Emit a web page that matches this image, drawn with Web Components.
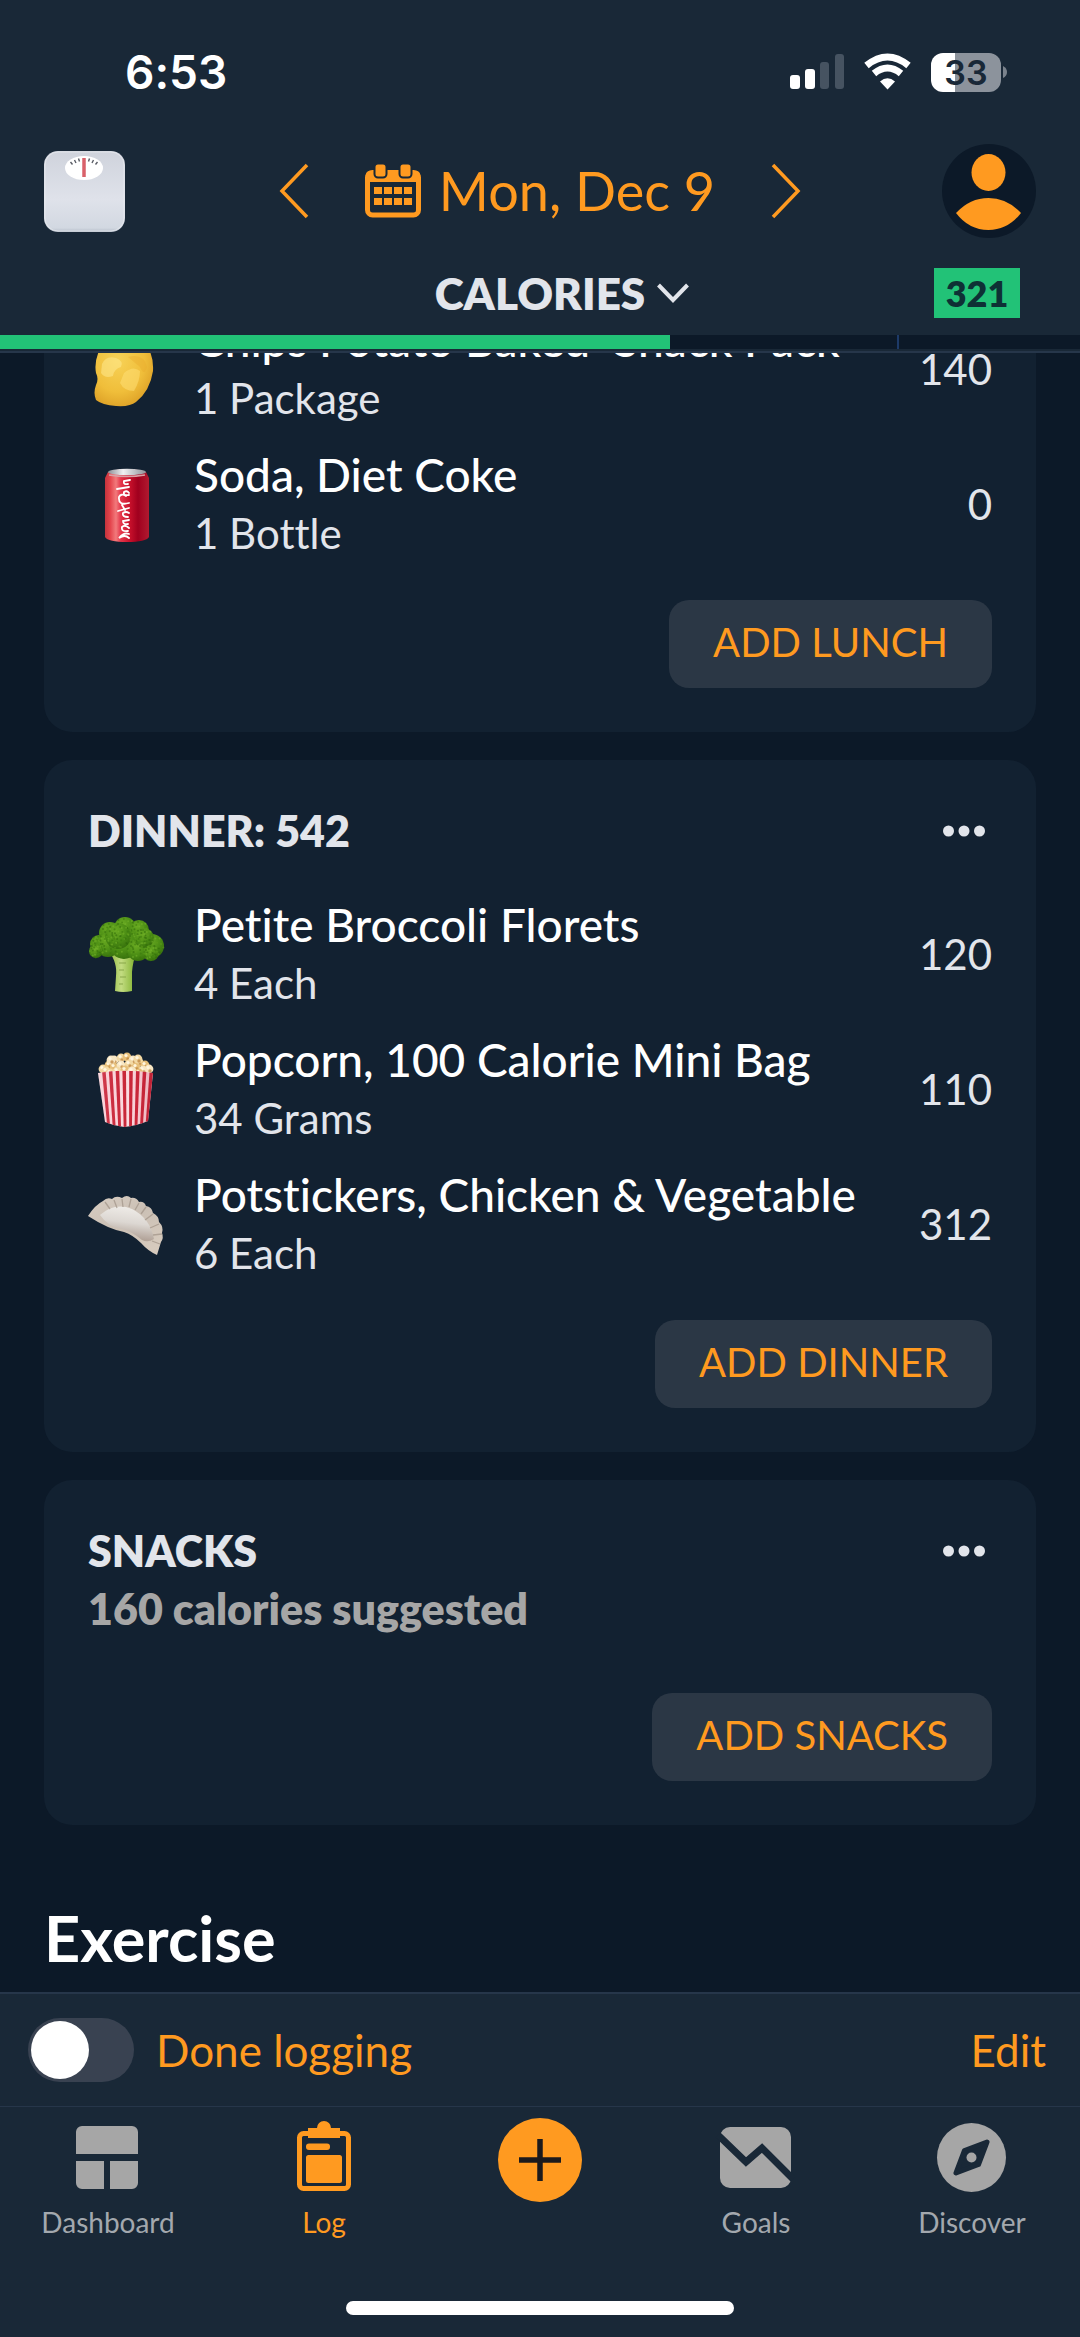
<!DOCTYPE html>
<html lang="en">
<head>
<meta charset="utf-8">
<meta name="viewport" content="width=device-width, initial-scale=1">
<title>Food log</title>
<style>
  :root {
    --bg: #0c1928;
    --bar: #192837;
    --card: #122131;
    --raised: #2b3745;
    --line: #26364a;
    --accent: #ff9a20;
    --green: #22c277;
    --text: #ffffff;
    --soft: #e2e5eb;
    --muted: #a6a6a6;
  }
  body {
    margin: 0;
    background: var(--bg);
    color: var(--text);
    font-family: Lato, "Open Sans", sans-serif;
    font-variant-ligatures: none;
  }
</style>
</head>
<body>
<log-app>
  <meal-card action="ADD LUNCH" continued>
    <food-row icon="chips" name="Chips Potato Baked  Snack Pack" amount="1 Package" calories="140"></food-row>
    <food-row icon="can" name="Soda, Diet Coke" amount="1 Bottle" calories="0"></food-row>
  </meal-card>
  <meal-card heading="DINNER: 542" action="ADD DINNER">
    <food-row icon="broccoli" name="Petite Broccoli Florets" amount="4 Each" calories="120"></food-row>
    <food-row icon="popcorn" name="Popcorn, 100 Calorie Mini Bag" amount="34 Grams" calories="110"></food-row>
    <food-row icon="dumpling" name="Potstickers, Chicken &amp; Vegetable" amount="6 Each" calories="312"></food-row>
  </meal-card>
  <meal-card heading="SNACKS" note="160 calories suggested" action="ADD SNACKS"></meal-card>
</log-app>

<script>
const RESET = `
  *, *::before, *::after { box-sizing: border-box; }
  button { font: inherit; color: inherit; background: none; border: 0; padding: 0; margin: 0; cursor: pointer; }
  a { color: inherit; text-decoration: none; }
  svg { display: block; flex: none; overflow: visible; }
  h1, h2, p { margin: 0; }
`;

class BaseElement extends HTMLElement {
  connectedCallback() {
    if (this.shadowRoot) return;
    const t = document.createElement('template');
    t.innerHTML = `<style>${RESET}${this.styles()}</style>${this.markup()}`;
    this.attachShadow({ mode: 'open' }).append(t.content.cloneNode(true));
  }
  attr(n) {
    return (this.getAttribute(n) || '').replace(/&/g, '&amp;').replace(/</g, '&lt;');
  }
}

/* ---------- food pictures, 76 x 76 ---------- */

function broccoli() {
  const blobs = [[11,28,9],[22,17,11],[37,12,11],[51,14,10],[64,30,12],[20,29,12],[36,28,15],[50,34,11],[8,35,7],[30,20,13],[56,22,10],[63,37,8]];
  const cols = ['#2f6a0a', '#5f9f1c', '#76b52c', '#38760d'];
  let head = '';
  for (const [x, y, r] of blobs) head += `<circle cx="${x}" cy="${y}" r="${r}" fill="url(#leaf)"/>`;
  let dots = '';
  for (const [x, y, r] of blobs)
    for (let i = 0; i < 22; i++) {
      const a = i * 2.4, d = r * Math.sqrt((i + 1) / 24);
      dots += `<circle cx="${(x + d * Math.cos(a)).toFixed(1)}" cy="${(y + d * Math.sin(a)).toFixed(1)}" r="1" fill="${cols[i % 4]}" opacity=".55"/>`;
    }
  return `<defs>
      <radialGradient id="leaf" cx=".4" cy=".3" r=".75"><stop offset="0" stop-color="#6aab22"/><stop offset=".6" stop-color="#4a8c14"/><stop offset="1" stop-color="#366f0c"/></radialGradient>
      <linearGradient id="stem"><stop offset="0" stop-color="#8fb83c"/><stop offset=".45" stop-color="#c3dc82"/><stop offset="1" stop-color="#7fb02c"/></linearGradient>
    </defs>
    <path d="M21 36 C27 43 29 52 28 60 L27 75 Q35 77 44 75 L44 56 Q45 45 48 38 Z" fill="url(#stem)"/>
    <path d="M31 47h7M31 54h5M32 61h6M31 68h4" stroke="#8aa84a" stroke-width="1.2"/>
    ${head}${dots}`;
}

function popcorn() {
  const puffs = [[15,18],[21,14],[26,9],[33,7],[39,6],[45,9],[51,11],[57,14],[61,18],[18,20],[26,16],[33,14],[41,13],[48,16],[55,19],[29,20],[37,19],[44,20],[22,22],[51,22],[23,9],[50,8]];
  let p = '';
  puffs.forEach(([x, y], i) => {
    p += `<circle cx="${x}" cy="${y}" r="4.4" fill="${['#f3d9a4', '#e7bf7a', '#f8e7c4'][i % 3]}"/><circle cx="${x + 1}" cy="${y + 2}" r="1.7" fill="#b97c35" opacity=".7"/><circle cx="${x - 1}" cy="${y - 1.5}" r="1.6" fill="#fff6df"/>`;
  });
  let s = '';
  for (let i = 0; i < 8; i++) {
    const a = 14 + i * 6.8, b = 19.5 + i * 5.4;
    s += `<path d="M${a} 20 L${a + 3.6} 20 L${b + 2.8} 78 L${b} 78 Z" fill="#c9283a"/>`;
  }
  return `<defs><clipPath id="tub"><path d="M10 22 Q37 17 65 22 L60 70 Q48 75 36 76 Q26 75 17 71 Z"/></clipPath>
      <linearGradient id="shade"><stop offset="0" stop-color="#fff" stop-opacity=".25"/><stop offset=".5" stop-color="#e02040" stop-opacity="0"/><stop offset="1" stop-color="#80001c" stop-opacity=".3"/></linearGradient></defs>
    ${p}
    <g clip-path="url(#tub)"><rect width="76" height="80" fill="#fbdde2"/>${s}<rect width="76" height="80" fill="url(#shade)"/></g>`;
}

const dumpling = () => `<defs>
    <linearGradient id="dough" x1="0" y1="0" x2=".7" y2="1"><stop offset="0" stop-color="#d8cec3"/><stop offset=".5" stop-color="#cbc0b5"/><stop offset="1" stop-color="#d6cabd"/></linearGradient>
    <linearGradient id="belly" x1=".55" y1="0" x2=".35" y2="1"><stop offset="0" stop-color="#efece8"/><stop offset=".45" stop-color="#dcd7d2"/><stop offset="1" stop-color="#a59387"/></linearGradient>
  </defs>
  <path d="M0 30 Q7 19 15 15 Q19 11 24 13 Q28 9 34 12 Q39 8 43 12 Q48 11 51 16 Q56 15 58 20 Q64 21 65 27 Q71 30 71 36 Q76 41 74 47 Q76 52 73 56 L69 69 Q60 65 53 57 Q45 49 36 46 Q20 43 0 30 Z" fill="url(#dough)"/>
  <path d="M12 29 Q27 16 44 23 Q62 32 66 53 Q60 57 54 54 Q45 46 34 43 Q20 41 12 29 Z" fill="url(#belly)"/>
  <path d="M17 16l5 7M26 14l3 8M34 13l1 8M43 13l-2 8M51 17l-4 7M58 21l-5 7M65 28l-8 6M71 38l-9 4M74 48l-9 1M72 58l-8-3" stroke="#a3968a" stroke-width="1.3" opacity=".75"/>`;

const can = () => `<defs>
    <linearGradient id="red"><stop offset="0" stop-color="#c4333c"/><stop offset=".12" stop-color="#e4444c"/><stop offset=".25" stop-color="#f27a7c"/><stop offset=".36" stop-color="#e5354a"/><stop offset=".58" stop-color="#c40f2a"/><stop offset=".75" stop-color="#a0001e"/><stop offset="1" stop-color="#b01a30"/></linearGradient>
    <linearGradient id="lid"><stop offset="0" stop-color="#8d8f96"/><stop offset=".4" stop-color="#f0f0f2"/><stop offset="1" stop-color="#8f9299"/></linearGradient>
  </defs>
  <path d="M20 6 Q39 0 58 6 L61 12 V71 Q58 76 39 76 Q20 76 17 71 V12 Z" fill="url(#red)"/>
  <ellipse cx="39" cy="6" rx="19" ry="3.2" fill="url(#lid)"/>
  <path d="M21 9 Q39 12 57 9" fill="none" stroke="#d9a0a4" stroke-width="1.5"/>
  <path d="M41 72 Q37 68 31 72 Q36 66 41 68 M40 65 Q33 66 34 61 Q37 58 41 62 M40 58 Q35 59 35 55 L41 54 M40 51 Q34 51 35 47 Q38 45 41 47 M30 45 L41 42 M37 44 L34 39 M41 37 Q30 40 31 31 Q33 27 38 30 M41 29 Q35 30 36 26 Q39 24 41 27 M29 23 L41 21 M40 18 Q35 19 36 15 L42 14" fill="none" stroke="#fff" stroke-width="1.8" stroke-linecap="round"/>`;

const chips = () => `<defs>
    <radialGradient id="chip" cx=".4" cy=".35" r=".75"><stop offset="0" stop-color="#f7d257"/><stop offset=".6" stop-color="#f0be3a"/><stop offset="1" stop-color="#d99a22"/></radialGradient>
  </defs>
  <path d="M18 8 Q40 -2 56 12 Q66 22 65 40 Q62 60 48 71 Q42 76 28 75 Q14 74 8 69 Q5 62 8 54 Q11 48 8 42 Q5 26 18 8 Z" fill="url(#chip)"/>
  <path d="M14 33 Q18 24 28 27 Q36 30 33 36 Q26 38 25 45 Q17 48 13 42 Z" fill="#ffeb94" opacity=".5"/>
  <path d="M36 42 Q45 34 52 40 Q52 50 46 60 Q36 60 32 52 Z" fill="#ffe27a" opacity=".5"/>
  <path d="M40 26 Q56 22 59 36 Q56 46 52 36 Z" fill="#e8a92c" opacity=".4"/>`;

const FOOD = { broccoli, popcorn, dumpling, can, chips };

/* ---------- status bar ---------- */

customElements.define('status-bar', class extends BaseElement {
  styles() { return `
    :host { display: flex; align-items: center; justify-content: space-between; height: 144px;
            padding: 0 73px 0 125px; font-family: Inter, sans-serif; font-weight: 600; }
    time { font-size: 46px; line-height: 56px; }
    .right { display: flex; align-items: center; gap: 20px; }
    .battery { display: flex; align-items: center; gap: 2px; }
    .cell { width: 70px; height: 39px; border-radius: 12px; display: grid; place-items: center;
            font-size: 34px; line-height: 39px; color: var(--bar);
            background: linear-gradient(90deg, #fff 34%, #8c939c 34%); }
  `; }
  markup() { return `
    <time>6:53</time>
    <div class="right">
      <svg width="54" height="36" viewBox="0 0 54 36" aria-hidden="true">
        <rect y="21" width="10" height="14" rx="3" fill="#fff"/><rect x="15" y="15" width="10" height="20" rx="3" fill="#fff"/>
        <rect x="30" y="8" width="9" height="27" rx="3" fill="#465361"/><rect x="45" y="0" width="9" height="35" rx="3" fill="#465361"/>
      </svg>
      <svg width="47" height="36" viewBox="0 0 47 36" fill="none" stroke="#fff" aria-hidden="true">
        <path d="M2.500 11.500 Q23.500 -5.500 44.500 11.500" stroke-width="7"/>
        <path d="M10 19.500 Q23.500 8.500 37 19.500" stroke-width="7"/>
        <path d="M16 27.500 Q23.500 21 31 27.500 L23.500 35.500 Z" fill="#fff" stroke="none"/>
      </svg>
      <div class="battery"><span class="cell">33</span>
        <svg width="4" height="12" viewBox="0 0 4 12" aria-hidden="true"><path d="M0 0 Q4 2 4 6 T0 12 Z" fill="#7a828c"/></svg>
      </div>
    </div>`; }
});

/* ---------- date navigation and calorie budget ---------- */

customElements.define('date-nav', class extends BaseElement {
  styles() { return `
    :host { display: grid; grid-template-columns: 1fr auto 1fr; align-items: center; height: 94px; padding: 0 44px; }
    .mid { display: flex; align-items: center; gap: 56px; color: var(--accent); }
    .date { display: flex; align-items: center; gap: 18px; font-size: 54px; line-height: 64px; }
    .me { justify-self: end; }
  `; }
  markup() { return `
    <button aria-label="Weigh in">
      <svg width="81" height="81" viewBox="0 0 81 81">
        <defs><linearGradient id="g" x2="0" y2="1"><stop offset="0" stop-color="#cfd3dc"/><stop offset=".6" stop-color="#dfe2ea"/><stop offset=".95" stop-color="#d2d8e1"/><stop offset="1" stop-color="#b4bcc8"/></linearGradient></defs>
        <rect width="81" height="81" rx="14" fill="url(#g)"/><rect x="1" y="1" width="79" height="79" rx="13" fill="none" stroke="#eef0f4" stroke-width="1" opacity=".6"/>
        <ellipse cx="40" cy="17" rx="19" ry="12" fill="#fff"/>
        <path d="M26.500 11l2 2.500M30.500 9l1.500 3M34.500 7.500l1 3M45.500 7.500l-1 3M49.500 9l-1.500 3M53.500 11l-2 2.500" stroke="#5a5d66" stroke-width="1.400"/>
        <path d="M40 7v19" stroke="#d9616a" stroke-width="3.500"/>
      </svg>
    </button>
    <div class="mid">
      <button aria-label="Previous day"><svg width="30" height="54" viewBox="0 0 30 54" fill="none" stroke="currentColor" stroke-width="3.500"><path d="M28 1 L3 27 L28 53"/></svg></button>
      <button class="date">
        <svg width="56" height="54" viewBox="0 0 56 54" aria-hidden="true">
          <rect x="2.500" y="8.500" width="51" height="42.500" rx="5" fill="none" stroke="currentColor" stroke-width="5"/>
          <rect x="1" y="7" width="54" height="11" rx="4" fill="currentColor"/>
          <g fill="currentColor" stroke="#192837" stroke-width="2"><rect x="9.500" y="-.5" width="12" height="14" rx="3.500"/><rect x="34.500" y="-.5" width="12" height="14" rx="3.500"/></g>
          <path d="M9 23h8v7h-8zM19 23h8v7h-8zM29 23h8v7h-8zM39 23h8v7h-8zM9 34h8v7h-8zM19 34h8v7h-8zM29 34h8v7h-8zM39 34h8v7h-8z" fill="currentColor"/>
        </svg>
        <span>Mon, Dec 9</span>
      </button>
      <button aria-label="Next day"><svg width="30" height="54" viewBox="0 0 30 54" fill="none" stroke="currentColor" stroke-width="3.500"><path d="M2 1 L27 27 L2 53"/></svg></button>
    </div>
    <button class="me" aria-label="Profile">
      <svg width="94" height="94" viewBox="0 0 94 94">
        <circle cx="47" cy="47" r="47" fill="#0c1928"/>
        <ellipse cx="46.500" cy="28.500" rx="17" ry="18.500" fill="#ff9a20"/>
        <path d="M14 69 Q28 54 46.500 54 Q65 54 79 69 Q66 86 46.500 86 Q27 86 14 69 Z" fill="#ff9a20"/>
      </svg>
    </button>`; }
});

customElements.define('calorie-budget', class extends BaseElement {
  styles() { return `
    :host { display: block; padding-top: 30px; }
    .row { display: grid; grid-template-columns: 1fr auto 1fr; align-items: center; height: 50px; padding: 0 60px; }
    .pick { grid-column: 2; display: flex; align-items: center; gap: 12px; padding-left: 44px;
            color: var(--soft); font-size: 44px; font-weight: 800; line-height: 48px; }
    .left { justify-self: end; min-width: 86px; background: var(--green); color: #0e3035;
            font-size: 36px; font-weight: 800; line-height: 50px; text-align: center; }
    .track { display: flex; height: 14px; margin: 17px 0 2px; background: var(--bg); }
    .eaten { flex: 0 0 62%; background: var(--green); }
    .mark { flex: 0 0 calc(21% + 3px); border-right: 2px solid #1d3a68; }
  `; }
  markup() { return `
    <div class="row">
      <button class="pick">CALORIES
        <svg width="32" height="20" viewBox="0 0 32 20" fill="none" stroke="currentColor" stroke-width="4" aria-hidden="true"><path d="M1.500 2 L16 17 L30.500 2"/></svg>
      </button>
      <span class="left">321</span>
    </div>
    <div class="track"><div class="eaten"></div><div class="mark"></div></div>`; }
});

/* ---------- meals ---------- */

customElements.define('food-row', class extends BaseElement {
  styles() { return `
    :host { display: flex; align-items: center; gap: 30px; padding: 8px 0 11px; }
    .what { flex: 1; min-width: 0; line-height: 58px; }
    .name { font-size: 46px; font-weight: 500; white-space: pre; }
    .amount { font-size: 42px; color: var(--soft); }
    .cal { font-size: 42px; line-height: 58px; color: var(--soft); }
  `; }
  markup() { return `
    <svg width="76" height="76" viewBox="0 0 76 76" aria-hidden="true">${FOOD[this.getAttribute('icon')]()}</svg>
    <div class="what"><p class="name">${this.attr('name')}</p><p class="amount">${this.attr('amount')}</p></div>
    <span class="cal">${this.attr('calories')}</span>`; }
});

customElements.define('meal-card', class extends BaseElement {
  styles() { return `
    :host { display: block; background: var(--card); border-radius: 28px; padding: 42px 44px 44px; }
    :host([continued]) { padding-top: 0; border-radius: 0 0 28px 28px; }
    header { display: flex; justify-content: space-between; align-items: center; padding-right: 7px; }
    h2, .note { font-size: 43px; line-height: 58px; font-weight: 800; color: var(--soft); }
    .note { color: var(--muted); }
    .rows { padding: 28px 0 27px; }
    :host([continued]) .rows { padding-top: 0; }
    footer { display: flex; justify-content: flex-end; }
    .add { height: 88px; padding: 0 44px 4px; border-radius: 20px; background: var(--raised); color: var(--accent);
           font-size: 40px; line-height: 84px; }
  `; }
  markup() {
    const head = this.hasAttribute('heading') ? `<header><h2>${this.attr('heading')}</h2>
      <button aria-label="More"><svg width="42" height="12" viewBox="0 0 42 12" fill="#e2e5eb"><circle cx="5.500" cy="6" r="5.500"/><circle cx="21" cy="6" r="5.500"/><circle cx="36.500" cy="6" r="5.500"/></svg></button></header>` : '';
    const note = this.hasAttribute('note') ? `<p class="note">${this.attr('note')}</p>` : '';
    return `${head}${note}<div class="rows"><slot></slot></div>
      <footer><button class="add">${this.attr('action')}</button></footer>`;
  }
});

/* ---------- bottom bars ---------- */

customElements.define('done-bar', class extends BaseElement {
  styles() { return `
    :host { display: flex; align-items: center; justify-content: space-between; height: 115px; padding: 0 34px 0 28px;
            border-top: 2px solid var(--line); border-bottom: 1px solid var(--line);
            color: var(--accent); font-size: 44px; line-height: 56px; }
    label { display: flex; align-items: center; gap: 22px; }
    input { appearance: none; margin: 0; width: 106px; height: 64px; padding: 3px; border-radius: 32px; background: #394251; }
    input::before { content: ""; display: block; width: 58px; height: 58px; border-radius: 50%; background: #fff; }
  `; }
  markup() { return `<label><input type="checkbox" role="switch"><span>Done logging</span></label><button>Edit</button>`; }
});

const TABS = [
  ['Dashboard', `<path d="M16 10h50a6 6 0 0 1 6 6v22H10V16a6 6 0 0 1 6-6zM10 45h28v28H16a6 6 0 0 1-6-6zM44 45h28v22a6 6 0 0 1-6 6H44z" fill="currentColor"/>`],
  ['Log', `<rect x="17.500" y="17.500" width="49" height="55" rx="4" fill="none" stroke="currentColor" stroke-width="5"/>
    <path d="M35 12a7 7 0 0 1 14 0h9v10H26V12z" fill="currentColor"/>
    <rect x="24" y="27.500" width="24" height="6.500" rx="3" fill="currentColor"/><rect x="24" y="39" width="36" height="28" rx="2.500" fill="currentColor"/>`],
  ['', `<circle cx="42" cy="44" r="42" fill="#ff9a20"/><path d="M42 23v42M21 44h42" stroke="#1c1a1c" stroke-width="5.500"/>`],
  ['Goals', `<rect x="6" y="11" width="71" height="61" rx="10" fill="currentColor"/><path d="M4 19 L32 46 L48 32 L79 63" fill="none" stroke="#192837" stroke-width="7"/>`],
  ['Discover', `<circle cx="41.500" cy="41.500" r="34.500" fill="currentColor"/><path d="M57 26 L34.500 34.500 L26 57 L48.500 48.500 Z" fill="#192837" stroke="#192837" stroke-width="5" stroke-linejoin="round"/><circle cx="41.500" cy="41.500" r="5" fill="currentColor"/>`],
];

customElements.define('tab-bar', class extends BaseElement {
  styles() { return `
    :host { display: block; padding: 9px 0 22px; }
    nav { display: grid; grid-template-columns: repeat(5, 1fr); }
    a { display: flex; flex-direction: column; align-items: center; gap: 5px; color: #a3a8ae; font-size: 28px; line-height: 34px; }
    svg { color: var(--muted); }
    a[aria-current], a[aria-current] svg { color: var(--accent); }
    .home { width: 36%; height: 14px; margin: 62px auto 0; border-radius: 7px; background: #fff; }
  `; }
  markup() {
    return `<nav>${TABS.map(([n, art]) => `<a href="#${n.toLowerCase() || 'add'}"${n === 'Log' ? ' aria-current="page"' : ''}${n ? '' : ' aria-label="Add"'}>
      <svg width="84" height="84" viewBox="0 0 84 84" aria-hidden="true">${art}</svg>${n ? `<span>${n}</span>` : ''}</a>`).join('')}</nav>
      <div class="home"></div>`;
  }
});

customElements.define('log-app', class extends BaseElement {
  styles() { return `
    :host { display: flex; flex-direction: column; height: 100vh; }
    .top { flex: none; background: var(--bar); border-bottom: 2px solid var(--line); }
    .bottom { flex: none; background: var(--bar); }
    main { flex: 1; min-height: 0; overflow: hidden; padding: 0 44px; }
    /* the list is scrolled part of a row under the top bar */
    .list { display: flex; flex-direction: column; gap: 28px; margin-top: -50px; }
    h1 { font-size: 63px; line-height: 74px; font-weight: 700; margin-top: 48px; }
  `; }
  markup() { return `
    <div class="top"><status-bar></status-bar><date-nav></date-nav><calorie-budget></calorie-budget></div>
    <main><div class="list"><slot></slot><h1>Exercise</h1></div></main>
    <div class="bottom"><done-bar></done-bar><tab-bar></tab-bar></div>`; }
});
</script>
</body>
</html>
